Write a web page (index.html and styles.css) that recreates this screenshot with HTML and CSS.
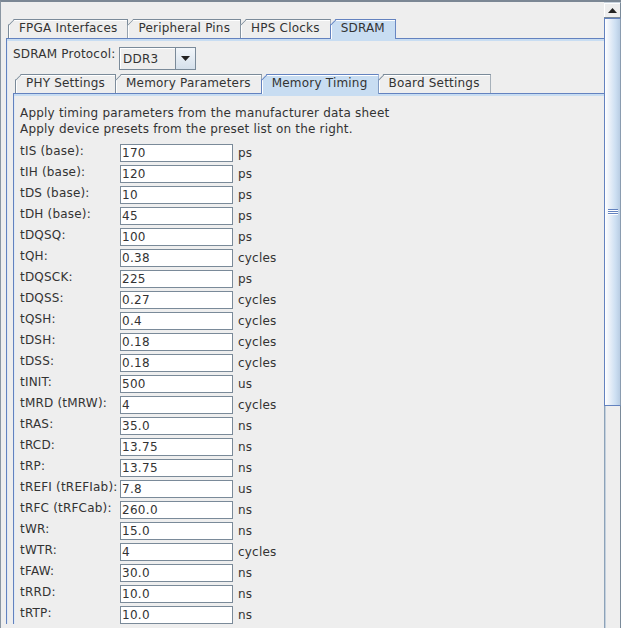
FILE: index.html
```html
<!DOCTYPE html>
<html>
<head>
<meta charset="utf-8">
<link rel="stylesheet" href="styles.css">
</head>
<body>
<div class="window">
  <div class="main">
    <div class="tabs">
      <div class="tab">FPGA Interfaces</div>
      <div class="tab">Peripheral Pins</div>
      <div class="tab">HPS Clocks</div>
      <div class="tab selected">SDRAM</div>
    </div>
    <div class="panel outer-panel">
      <div class="protocol-row">
        <span class="protocol-label">SDRAM Protocol:</span>
        <div class="combo">
          <span class="combo-value">DDR3</span>
          <span class="combo-btn"><svg width="9" height="5" viewBox="0 0 9 5"><path d="M0 0H9L4.5 5Z" fill="#222"/></svg></span>
        </div>
      </div>
      <div class="tabs inner-tabs">
        <div class="tab">PHY Settings</div>
        <div class="tab">Memory Parameters</div>
        <div class="tab selected">Memory Timing</div>
        <div class="tab">Board Settings</div>
      </div>
      <div class="panel inner-panel">
        <p class="intro">Apply timing parameters from the manufacturer data sheet<br>Apply device presets from the preset list on the right.</p>
        <div class="params">
          <div class="param-row"><span class="param-label">tIS (base):</span><span class="field">170</span><span class="unit">ps</span></div>
          <div class="param-row"><span class="param-label">tIH (base):</span><span class="field">120</span><span class="unit">ps</span></div>
          <div class="param-row"><span class="param-label">tDS (base):</span><span class="field">10</span><span class="unit">ps</span></div>
          <div class="param-row"><span class="param-label">tDH (base):</span><span class="field">45</span><span class="unit">ps</span></div>
          <div class="param-row"><span class="param-label">tDQSQ:</span><span class="field">100</span><span class="unit">ps</span></div>
          <div class="param-row"><span class="param-label">tQH:</span><span class="field">0.38</span><span class="unit">cycles</span></div>
          <div class="param-row"><span class="param-label">tDQSCK:</span><span class="field">225</span><span class="unit">ps</span></div>
          <div class="param-row"><span class="param-label">tDQSS:</span><span class="field">0.27</span><span class="unit">cycles</span></div>
          <div class="param-row"><span class="param-label">tQSH:</span><span class="field">0.4</span><span class="unit">cycles</span></div>
          <div class="param-row"><span class="param-label">tDSH:</span><span class="field">0.18</span><span class="unit">cycles</span></div>
          <div class="param-row"><span class="param-label">tDSS:</span><span class="field">0.18</span><span class="unit">cycles</span></div>
          <div class="param-row"><span class="param-label">tINIT:</span><span class="field">500</span><span class="unit">us</span></div>
          <div class="param-row"><span class="param-label">tMRD (tMRW):</span><span class="field">4</span><span class="unit">cycles</span></div>
          <div class="param-row"><span class="param-label">tRAS:</span><span class="field">35.0</span><span class="unit">ns</span></div>
          <div class="param-row"><span class="param-label">tRCD:</span><span class="field">13.75</span><span class="unit">ns</span></div>
          <div class="param-row"><span class="param-label">tRP:</span><span class="field">13.75</span><span class="unit">ns</span></div>
          <div class="param-row"><span class="param-label">tREFI (tREFIab):</span><span class="field">7.8</span><span class="unit">us</span></div>
          <div class="param-row"><span class="param-label">tRFC (tRFCab):</span><span class="field">260.0</span><span class="unit">ns</span></div>
          <div class="param-row"><span class="param-label">tWR:</span><span class="field">15.0</span><span class="unit">ns</span></div>
          <div class="param-row"><span class="param-label">tWTR:</span><span class="field">4</span><span class="unit">cycles</span></div>
          <div class="param-row"><span class="param-label">tFAW:</span><span class="field">30.0</span><span class="unit">ns</span></div>
          <div class="param-row"><span class="param-label">tRRD:</span><span class="field">10.0</span><span class="unit">ns</span></div>
          <div class="param-row"><span class="param-label">tRTP:</span><span class="field">10.0</span><span class="unit">ns</span></div>
        </div>
      </div>
    </div>
  </div>
  <div class="scrollbar">
    <div class="sb-up"><svg width="9" height="5" viewBox="0 0 9 5"><path d="M4.5 0L9 5H0Z" fill="#222"/></svg></div>
    <div class="sb-thumb"><div class="grip"></div></div>
    <div class="sb-track"></div>
  </div>
</div>
</body>
</html>
```

FILE: styles.css
```css
html, body {
  margin: 0;
  height: 628px;
  overflow: hidden;
  background: #eeeeee;
}
body {
  font-family: "DejaVu Sans", sans-serif;
  font-size: 12px;
  letter-spacing: 0.2px;
  color: #333333;
}
.window {
  display: flex;
  height: 628px;
  box-sizing: border-box;
  border-top: 2px solid #7b8794;
  border-left: 1px solid #8a96a2;
}
.main {
  flex: 1;
  min-width: 0;
  padding: 17px 0 0 5px;
  overflow: hidden;
}
.tabs {
  display: flex;
  align-items: flex-end;
  height: 19px;
  margin-left: 2px;
}
.tab {
  position: relative;
  box-sizing: border-box;
  height: 19px;
  border: 1px solid #7a8a99;
  border-bottom: 0;
  margin-right: -1px;
  padding: 0 10px;
  line-height: 17px;
  white-space: nowrap;
  background: #eeeeee;
  box-shadow: inset 1px 1px 0 #ffffff;
  clip-path: polygon(6px 0, 100% 0, 100% 100%, 0 100%, 0 6px);
}
.tab::before {
  content: "";
  position: absolute;
  left: -1px;
  top: 5px;
  width: 9px;
  height: 1px;
  background: #7a8a99;
  transform-origin: 0 0;
  transform: rotate(-45deg);
}
.tab.selected {
  background: #c8ddf2;
  border-color: #6382bf;
  height: 20px;
  margin-bottom: -1px;
  z-index: 1;
}
.tab.selected::before {
  background: #6382bf;
}
.panel {
  border-top: 1px solid #6382bf;
  border-left: 1px solid #6382bf;
  box-shadow: inset 0 2px 0 #c8ddf2, inset 1px 0 0 #dfe9f4;
}
.outer-panel {
  padding: 8px 0 0 6px;
}
.protocol-row {
  display: flex;
  align-items: flex-start;
  height: 23px;
}
.protocol-label {
  width: 106px;
  line-height: 16px;
  margin-top: -1px;
}
.combo {
  display: flex;
  box-sizing: border-box;
  width: 77px;
  height: 23px;
  border: 1px solid #7a8a99;
  background: #eeeeee;
}
.combo-value {
  flex: 1;
  padding-left: 3px;
  line-height: 22px;
  box-shadow: inset 1px 1px 0 #ffffff;
}
.combo-btn {
  display: flex;
  align-items: center;
  justify-content: center;
  width: 19px;
  border-left: 1px solid #7a8a99;
  background: linear-gradient(to bottom, #f2f6fa, #d5e0eb);
}
.inner-tabs {
  margin-top: 4px;
}
.inner-panel {
  padding: 11px 0 0 6px;
}
.intro {
  margin: 0;
  line-height: 16px;
  white-space: nowrap;
}
.params {
  display: flex;
  flex-direction: column;
  gap: 3px;
  margin-top: 7px;
}
.param-row {
  display: flex;
  align-items: flex-start;
  height: 18px;
}
.param-label {
  width: 100px;
  line-height: 15px;
  white-space: nowrap;
}
.field {
  box-sizing: border-box;
  width: 113px;
  height: 18px;
  border: 1px solid #7a8a99;
  background: #ffffff;
  padding-left: 1px;
  line-height: 17px;
  letter-spacing: 0.3px;
}
.unit {
  margin-left: 5px;
  line-height: 19px;
}
.scrollbar {
  display: flex;
  flex-direction: column;
  width: 17px;
}
.sb-up {
  display: flex;
  align-items: center;
  justify-content: center;
  box-sizing: border-box;
  height: 16px;
  border-top: 1px solid #c9d3dd;
  border-right: 1px solid #7a8a99;
  border-bottom: 1px solid #7a8a99;
  background: #eeeeee;
  box-shadow: inset 1px 1px 0 #ffffff;
}
.sb-thumb {
  display: flex;
  align-items: center;
  justify-content: center;
  box-sizing: border-box;
  height: 388px;
  border: 1px solid #6382bf;
  border-right-color: #8a9cb0;
  background: linear-gradient(to right, #ffffff 0%, #e6eef8 35%, #cddff2 70%, #b9cde3 100%);
}
.grip {
  width: 10px;
  height: 6px;
  margin-left: 1px;
  background: repeating-linear-gradient(to bottom, #6382bf 0 1px, #ffffff 1px 2px);
}
.sb-track {
  flex: 1;
  box-sizing: border-box;
  border-left: 1px solid #8da2b8;
  border-right: 1px solid #7a8a99;
  box-shadow: inset 1px 0 0 #c3d0dd;
  background: #eeeeee;
}
```
